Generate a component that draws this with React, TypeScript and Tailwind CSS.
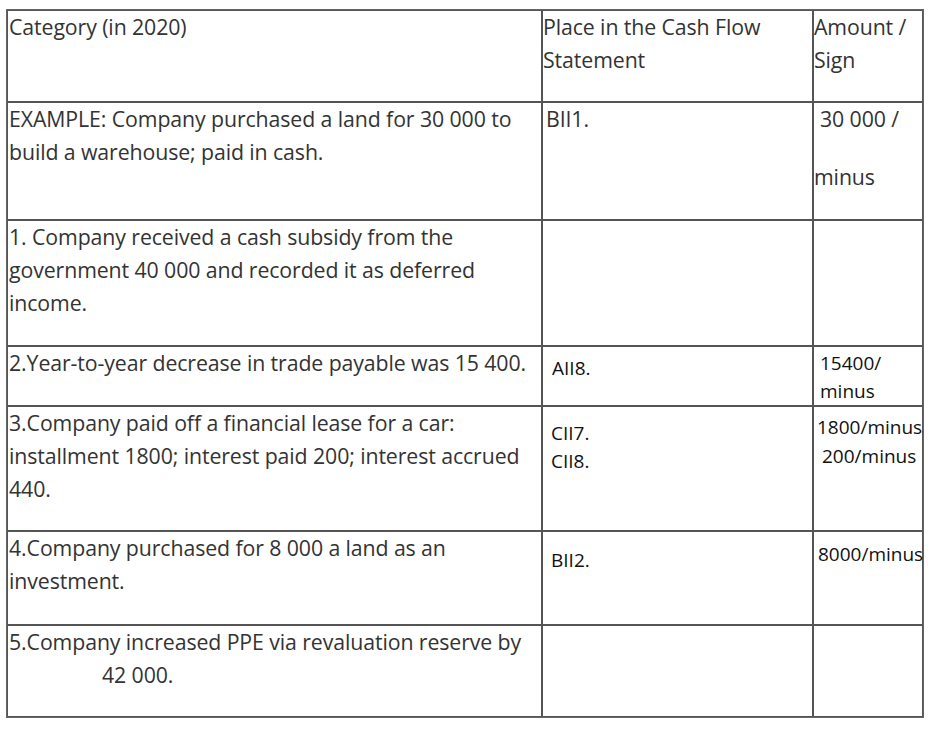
import React from "react";

const seg = "font-['Open_Sans','Noto_Sans',sans-serif] text-[21.3px] leading-[33px] text-[#333] tracking-[-0.1px] -mt-[1px]";
const cal = "font-['Open_Sans','Noto_Sans',sans-serif] text-[19px] leading-[28px] text-[#111]";
const td = "border border-[#555] align-top p-0";

export default function App() {
  return (
    <div className="bg-white w-[935px] h-[733px] pt-[9px] pl-[6px]">
      <table className="border-separate border-spacing-0 border border-[#666] table-fixed w-[916px]">
        <colgroup>
          <col className="w-[535px]" />
          <col className="w-[271px]" />
          <col className="w-[110px]" />
        </colgroup>
        <tbody>
          <tr className="h-[92px]">
            <td className={td}>
              <div className={`${seg} pl-[1px] whitespace-nowrap`}>Category (in 2020)</div>
            </td>
            <td className={td}>
              <div className={`${seg} whitespace-nowrap`}>
                Place in the Cash Flow
                <br />
                Statement
              </div>
            </td>
            <td className={td}>
              <div className={`${seg} whitespace-nowrap`}>
                Amount /
                <br />
                Sign
              </div>
            </td>
          </tr>
          <tr className="h-[118px]">
            <td className={td}>
              <div className={`${seg} pl-[1px] whitespace-nowrap`}>
                EXAMPLE: Company purchased a land for 30 000 to
                <br />
                build a warehouse; paid in cash.
              </div>
            </td>
            <td className={td}>
              <div className={`${seg} pl-[3px]`}>BII1.</div>
            </td>
            <td className={td}>
              <div className={`${seg} pl-[6px] whitespace-nowrap`}>30 000 /</div>
              <div className={`${seg} mt-[25px]`}>minus</div>
            </td>
          </tr>
          <tr className="h-[126px]">
            <td className={td}>
              <div className={`${seg} pl-[1px] whitespace-nowrap`}>
                1. Company received a cash subsidy from the
                <br />
                government 40 000 and recorded it as deferred
                <br />
                income.
              </div>
            </td>
            <td className={td}></td>
            <td className={td}></td>
          </tr>
          <tr className="h-[60px]">
            <td className={td}>
              <div className={`${seg} pl-[1px] whitespace-nowrap`}>
                2.Year-to-year decrease in trade payable was 15 400.
              </div>
            </td>
            <td className={td}>
              <div className={`${cal} pl-[9px] pt-[7px]`}>AII8.</div>
            </td>
            <td className={td}>
              <div className={`${cal} pl-[6px] pt-[2px]`}>
                15400/
                <br />
                minus
              </div>
            </td>
          </tr>
          <tr className="h-[125px]">
            <td className={td}>
              <div className={`${seg} pl-[1px] whitespace-nowrap`}>
                3.Company paid off a financial lease for a car:
                <br />
                installment 1800; interest paid 200; interest accrued
                <br />
                440.
              </div>
            </td>
            <td className={td}>
              <div className={`${cal} pl-[8px] pt-[12px] leading-[27px]`}>
                CII7.
                <br />
                CII8.
              </div>
            </td>
            <td className={td}>
              <div className={`${cal} whitespace-nowrap pl-[3px] pt-[6px] leading-[29px]`}>
                1800/minus
                <br />
                <span className="pl-[5px]">200/minus</span>
              </div>
            </td>
          </tr>
          <tr className="h-[94px]">
            <td className={td}>
              <div className={`${seg} pl-[1px] whitespace-nowrap`}>
                4.Company purchased for 8 000 a land as an
                <br />
                investment.
              </div>
            </td>
            <td className={td}>
              <div className={`${cal} pl-[8px] pt-[14px]`}>BII2.</div>
            </td>
            <td className={td}>
              <div className={`${cal} whitespace-nowrap pl-[4px] pt-[8px]`}>8000/minus</div>
            </td>
          </tr>
          <tr className="h-[92px]">
            <td className={td}>
              <div className={`${seg} pl-[1px] whitespace-nowrap`}>
                5.Company increased PPE via revaluation reserve by
                <br />
                <span className="pl-[93px]">42 000.</span>
              </div>
            </td>
            <td className={td}></td>
            <td className={td}></td>
          </tr>
        </tbody>
      </table>
    </div>
  );
}
